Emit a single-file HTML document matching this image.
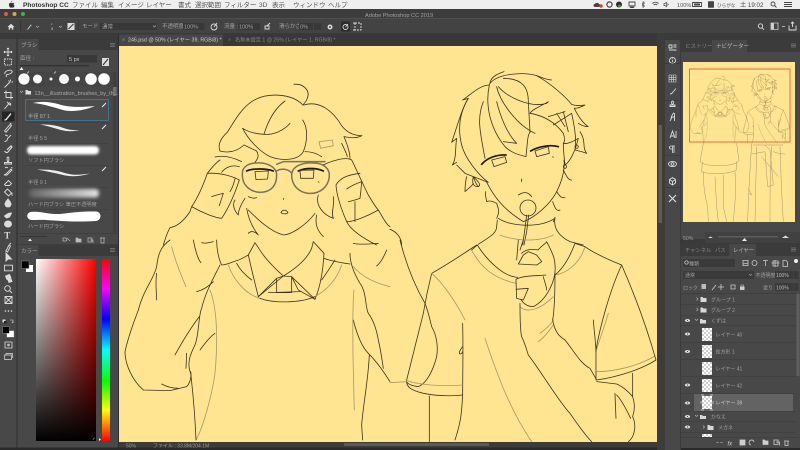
<!DOCTYPE html>
<html lang="ja"><head><meta charset="utf-8"><title>Adobe Photoshop CC 2019</title>
<style>
html,body{margin:0;padding:0;width:800px;height:450px;overflow:hidden;background:#3a3a3a}
svg{display:block;position:absolute;left:0;top:0;filter:blur(.35px)}
text{font-family:"Liberation Sans","Noto Sans CJK JP",sans-serif;font-size:6px;fill:#a0a0a0}
.w{fill:#e0e0e0}.d{fill:#8a8a8a}.m{font-size:6.5px;fill:#555}
.ic{fill:none;stroke:#dcdcdc;stroke-width:.9}
.art path,.art ellipse,.art circle{fill:none;stroke:#3a3320;stroke-linecap:round;stroke-linejoin:round}
.art .l{stroke:#a89a6a;stroke-width:.5em}
.art .k{stroke:#1d1a10;stroke-width:5}
.art .g{stroke:#77735e;stroke-width:4.500}
</style></head><body>
<svg width="800" height="450" viewBox="0 0 800 450" xmlns="http://www.w3.org/2000/svg">
<defs>
<filter id="bl" x="-10%" y="-60%" width="120%" height="220%"><feGaussianBlur stdDeviation="1.400"/></filter>
<filter id="bl2" x="-10%" y="-60%" width="120%" height="220%"><feGaussianBlur stdDeviation="1.800"/></filter>
<linearGradient id="gx" x1="0" x2="1" y1="0" y2="0"><stop offset="0" stop-color="#fff"/><stop offset="1" stop-color="#f00"/></linearGradient>
<linearGradient id="gy" x1="0" x2="0" y1="0" y2="1"><stop offset="0" stop-color="#000" stop-opacity="0"/><stop offset="1" stop-color="#000"/></linearGradient>
<linearGradient id="hue" x1="0" x2="0" y1="0" y2="1"><stop offset="0" stop-color="#f00"/><stop offset=".16" stop-color="#f0f"/><stop offset=".33" stop-color="#00f"/><stop offset=".5" stop-color="#0ff"/><stop offset=".67" stop-color="#0f0"/><stop offset=".83" stop-color="#ff0"/><stop offset="1" stop-color="#f00"/></linearGradient>
<linearGradient id="soft" x1="0" x2="1"><stop offset="0" stop-color="#fff" stop-opacity=".15"/><stop offset=".5" stop-color="#fff" stop-opacity=".5"/><stop offset="1" stop-color="#fff" stop-opacity=".85"/></linearGradient>
<pattern id="chk" width="4" height="4" patternUnits="userSpaceOnUse"><rect width="4" height="4" fill="#fff"/><rect width="2" height="2" fill="#cfcfcf"/><rect x="2" y="2" width="2" height="2" fill="#cfcfcf"/></pattern>
<clipPath id="cv"><rect x="119" y="46" width="538" height="396"/></clipPath>
<clipPath id="tb"><rect x="683" y="62" width="112" height="160"/></clipPath>
<g id="art" class="art">
<!-- left head -->
<g transform="translate(120 45) scale(.3333)">
<path d="M522 118C548 115 572 135 562 160C558 172 552 175 549 180"/>
<path d="M549 180C515 145 440 140 395 170C365 190 345 225 322 262C302 280 293 300 300 318"/>
<path d="M552 180C600 165 640 200 665 242C680 262 700 272 726 272C712 280 695 280 672 275"/>
<path d="M495 168C465 190 445 225 432 268C400 266 380 258 368 250"/>
<path d="M432 268C460 270 490 258 510 235"/>
<path d="M368 250C385 285 420 320 450 335C490 350 535 345 550 320C562 290 565 250 548 225"/>
<path d="M672 275C680 295 690 320 690 340M665 295C672 310 680 325 682 335"/>
<path d="M300 318C325 325 350 320 372 300L410 318C420 335 410 345 405 352M285 336C310 330 335 335 365 350"/>
<path d="M597 290L637 285L640 302L602 310Z" class="l"/>
<path d="M555 320C570 320 590 325 605 335"/>
<path class="g" d="M368 378C362 415 385 440 420 442C455 442 470 420 470 390C470 365 440 352 410 354C390 354 372 362 368 378Z"/>
<path class="g" d="M515 390C515 365 545 352 580 354C610 354 630 370 628 395C625 425 600 448 565 445C535 442 515 420 515 390Z"/>
<path class="g" d="M470 358L490 350L615 350M470 378C480 370 505 370 515 385"/>
<path class="k" d="M380 378C395 370 440 370 460 378M535 378C555 368 590 368 610 378"/>
<path d="M405 380L445 378L443 402L408 404ZM540 376L582 375L580 400L542 400Z"/>
<path d="M490 460L491 463M595 410L597 412M483 503C488 493 498 493 504 503C500 508 488 508 483 503"/>
<path d="M385 495C410 520 450 560 490 570C510 570 555 545 585 505"/>
<path d="M345 465C335 480 345 500 355 510C355 495 362 480 375 460M385 455C395 460 405 460 410 458M595 450C585 480 610 510 640 520C632 500 645 480 640 455"/>
<path d="M380 490C385 520 395 545 415 570C405 560 395 555 385 565M590 510C585 535 590 555 610 575"/>
<path d="M300 345C285 355 272 372 262 385C250 420 235 455 215 485C250 505 285 518 305 520C325 490 345 445 358 405C340 395 300 382 262 385"/>
<path d="M275 455C288 450 298 448 310 445C306 458 302 470 298 482M305 382C315 368 335 358 358 365M345 400C342 415 338 428 330 440"/>
<path d="M215 485L210 500C190 530 170 545 150 548C140 565 135 585 130 600"/>
<path d="M610 360C640 345 680 335 695 345C710 375 730 420 745 450C760 475 770 490 775 495C740 515 700 530 680 530C665 495 650 450 648 420C660 400 680 390 720 385"/>
<path d="M680 432C695 422 710 415 725 410C724 428 722 445 720 460C708 464 696 468 685 470M705 470L705 530M680 530C690 550 720 575 770 600M775 495C790 520 800 540 810 545"/>
</g>
<!-- left body -->
<g transform="translate(120 240) scale(.3333)">
<path d="M150 0C130 15 115 30 110 80C100 120 70 150 55 210C40 250 25 290 15 335C15 370 35 420 70 450L150 452L200 440C210 430 215 410 212 395"/>
<path d="M300 75C280 115 255 160 245 205C235 225 238 280 225 315C210 345 200 370 212 400"/>
<path d="M110 100C105 130 110 160 110 180M230 155C250 150 265 140 280 125M165 345C190 300 215 260 238 230M240 330C255 310 270 290 285 280"/>
<path class="l" d="M155 20C165 60 185 110 198 140M270 150C290 200 295 290 285 400C275 470 250 560 228 600"/>
<path d="M212 400C218 450 225 530 228 600"/>
<path d="M290 0C290 25 295 55 305 75C320 75 340 65 350 62C365 58 375 50 385 45"/>
<path d="M385 45L405 8L425 38C440 60 470 90 490 108L415 170C405 130 395 90 385 45"/>
<path d="M490 108C520 90 560 60 575 25L580 5L612 40C610 80 605 130 585 178L515 110"/>
<path d="M490 108L515 110L535 150L585 178M490 108L470 115L415 170M470 115L470 158L515 158L515 110M445 158L540 155"/>
<path class="l" d="M325 75C340 120 380 165 420 175M585 170C620 150 650 120 665 75"/>
<path d="M420 175C460 190 540 190 585 170M612 55C625 60 645 65 690 72M350 70C360 90 375 105 395 120M605 120C620 100 635 75 645 60"/>
<path d="M690 40C690 70 705 105 720 130C740 155 735 200 745 220C760 240 770 270 775 300C780 320 785 350 790 385"/>
<path d="M700 240C710 280 725 320 745 340C760 355 785 385 810 425"/>
<path class="l" d="M700 80C730 115 770 130 810 140"/>
<path class="l" d="M702 150C695 230 700 400 703 510"/>
<path d="M748 345C745 420 730 490 725 555L728 600"/>
<path d="M220 0C225 30 235 60 243 68M280 5C265 10 250 10 245 8M700 10C720 15 750 12 775 10M800 30C790 55 780 70 770 78M200 340L198 385M125 432C140 440 160 445 175 445"/>
</g>
<!-- right head -->
<g transform="translate(390 45) scale(.3333)">
<path d="M300 112C305 95 320 88 342 80M298 118C320 85 400 80 440 92C460 100 475 105 485 105"/>
<path d="M440 92C490 120 530 160 545 178C555 182 570 182 585 180C570 188 560 190 553 190C565 215 580 235 595 245C580 245 572 240 565 235"/>
<path d="M298 120C270 120 240 150 218 165L235 160C215 190 200 250 185 292L200 280C195 310 200 340 187 360L200 352"/>
<path d="M235 160C205 210 205 260 215 300C225 340 265 390 295 412L250 395C255 410 260 420 265 425"/>
<path d="M298 120C285 180 300 250 345 305C365 325 390 330 408 335C412 300 412 265 422 260"/>
<path d="M320 125C330 170 380 240 435 265M340 100C400 100 415 130 415 170L420 260M325 125C350 155 420 190 470 175L475 170C440 190 425 195 420 205M320 170C330 210 350 265 380 295L340 290"/>
<path d="M420 205C450 210 490 225 520 265C525 280 525 290 520 295"/>
<path d="M475 215L525 200M490 240L545 205M500 205L525 245M520 200L535 260M545 205C555 250 560 290 555 315L575 320L590 325C575 305 590 290 570 260"/>
<path d="M520 295C530 298 550 290 565 280C555 320 540 350 525 360C523 340 520 320 520 295"/>
<path d="M290 412C310 450 335 490 400 530C430 520 480 480 500 440C515 410 525 375 522 345"/>
<path class="k" d="M275 358C290 340 320 328 348 330M422 318C445 305 480 298 505 305"/>
<path d="M305 345L345 335L350 352L312 365ZM435 318L475 305L478 325L440 335ZM488 335L490 337M395 402L395 410M385 450C400 440 415 440 425 455"/>
<circle cx="414" cy="489" r="24"/>
<path d="M410 510L405 550L398 600M416 510L410 560L402 600"/>
<path d="M325 520C360 545 450 550 495 520L490 530"/>
<path d="M322 525L320 545C320 565 300 575 265 598M495 517C490 545 500 570 540 590L580 600"/>
<path class="l" d="M330 570C380 590 450 590 490 570"/>
<path d="M287 440C285 455 290 465 290 470C300 465 310 470 320 475C325 490 330 500 320 520M488 470C495 490 500 500 510 495M500 440C510 455 515 460 525 458M520 375C530 395 535 405 545 405"/>
<path d="M200 360L225 385L250 395C265 410 275 420 265 425C250 425 245 415 250 395M0 553C20 560 35 580 35 600"/>
<circle cx="525" cy="365" r="5"/><circle cx="560" cy="305" r="5"/>
<path d="M230 395C225 415 225 430 225 440C235 430 245 425 250 415"/>
<path d="M285 340C270 260 260 220 280 170"/>
</g>
<!-- right body -->
<g transform="translate(390 240) scale(.3333)">
<path d="M30 0C45 60 70 130 105 190C115 215 120 240 125 260C140 285 145 320 140 350C130 390 110 430 85 440C70 438 55 435 50 425"/>
<path d="M260 15C215 45 170 75 125 100C115 140 105 190 100 220C85 280 65 360 50 420C48 440 60 450 100 460C150 470 190 468 218 465"/>
<path d="M218 250C220 330 218 400 218 465C215 510 215 540 195 600M118 468L118 605"/>
<path class="l" d="M125 100C160 130 200 190 225 240M48 420C80 435 160 440 218 435M0 428L50 425M245 30C270 80 310 115 378 130M585 20C570 70 530 100 495 105M620 395C680 395 750 375 795 348M655 220C640 270 625 310 618 335M285 295C320 400 360 510 425 605M445 305C465 290 480 270 490 255M450 280C470 265 485 250 490 240M390 200C410 220 450 210 490 170"/>
<path d="M245 30L262 15C290 60 340 110 383 112M555 10C540 50 520 85 495 105"/>
<path d="M555 10L585 20C620 45 670 65 695 75C730 155 770 260 798 360C760 385 690 410 620 420L600 385C570 370 550 330 525 300C510 290 495 280 488 240C495 200 495 130 495 100"/>
<path d="M695 75C660 150 630 260 618 330L618 420M610 240C612 270 618 310 618 340"/>
<path d="M728 400L728 470C735 490 735 510 728 530C740 555 735 590 715 605M620 425L680 432C700 440 720 460 728 470M675 460L678 535M680 465C695 480 710 510 722 535"/>
<path d="M395 40C405 30 420 25 445 30C450 20 470 10 470 5C480 25 495 50 495 75C500 120 470 180 430 200C415 200 400 192 393 178"/>
<path d="M378 118L380 175L400 180L415 145L378 148M385 72L440 75L455 65L440 45L415 35L400 45L385 72M378 118C400 105 450 108 468 105M460 110C465 130 470 140 470 150"/>
<path d="M390 190C390 230 390 270 395 290C405 310 410 330 415 345C450 390 510 490 540 520C560 550 590 590 605 605"/>
<path d="M218 320C210 330 205 340 210 342C214 342 218 338 218 335M385 0L380 60M400 0L390 30"/>
</g>
</g>
</defs>

<!-- chrome -->
<rect width="800" height="450" fill="#3a3a3a"/>
<rect width="800" height="9" fill="#efefef"/>
<rect y="9" width="800" height="9" fill="#3d3d3d"/>
<rect y="18" width="800" height="16" fill="#434343"/>
<rect y="18" width="800" height=".6" fill="#555"/>
<rect y="33.5" width="800" height="1" fill="#303030"/>

<!-- menu bar -->
<path d="M11.600 2.200c.6-.7.9-.9.8-1.400-.6.1-1.100.5-1.100 1.300zM14.400 3.200c-1-.8-1.800-.1-2.500-.1-.7 0-1.300-.7-2.300 0-1 .9-.8 2.700.2 4 .7.9 1.300.5 2 .4.7.1 1.300.5 2-.4.4-.5.7-1 .8-1.500-1.200-.5-1.200-1.900-.2-2.400z" fill="#333"/>
<text x="23" y="7" style="font-size:6.600px;font-weight:bold;fill:#333">Photoshop CC</text>
<text class="m" x="72" y="7">ファイル</text><text class="m" x="101" y="7">編集</text><text class="m" x="118" y="7">イメージ</text><text class="m" x="146" y="7">レイヤー</text><text class="m" x="178" y="7">書式</text><text class="m" x="195" y="7">選択範囲</text><text class="m" x="224" y="7">フィルター</text><text class="m" x="259" y="7">3D</text><text class="m" x="272" y="7">表示</text><text class="m" x="293" y="7">ウィンドウ</text><text class="m" x="328" y="7">ヘルプ</text>
<g fill="none" stroke="#444" stroke-width=".9">
<path d="M595 6.500c-1.500-.3-1.300-2.200.2-2.200.5-1.500 3.300-1.300 3.600.2 1.500 0 1.700 2 .2 2z" fill="#444"/>
<circle cx="609.500" cy="4.500" r="2.600" stroke-width="1.200"/>
<path d="M629 2h6v4h-6zM630.500 7.500h3l-1.500-1.800z"/>
<path d="M643 1.500l1.500 1.500-2.500 2.500M643 1.500v6l1.500-1.500-2.500-2.500" stroke-width=".6"/>
<path d="M652.500 3.500c1.800-1.700 4.200-1.700 6 0M653.800 5c1-.9 2.400-.9 3.400 0"/>
<path d="M664 3.500h1l1.500-1.200v4.500l-1.500-1.200h-1zM667.500 3.500l.8 1-.8 1" stroke-width=".7"/>
<path d="M692.500 2.500h9v4h-9z"/>
<circle cx="773" cy="4" r="2"/><path d="M774.500 5.500l2 2"/>
<path d="M784 2.500h8M784 4.500h8M784 6.500h8"/>
</g>
<circle cx="601" cy="6" r="1.700" fill="#e0392b"/>
<circle cx="619" cy="4.500" r="3" fill="#2c2c2c"/><circle cx="619.500" cy="6" r="1.500" fill="#3f8f3f"/>
<rect x="694" y="3.500" width="6" height="2" fill="#444"/>
<rect x="708" y="1.300" width="6" height="6.400" rx=".6" fill="#444"/>
<text x="677" y="7" style="font-size:5.600px;fill:#555">100%</text>
<text x="717" y="7" style="font-size:4.600px;fill:#555">ひらがな</text>
<text x="740" y="7" style="font-size:6.200px;fill:#444">土 19:02</text>

<!-- title -->
<circle cx="6" cy="14" r="2" fill="#e0584f"/><circle cx="14.500" cy="14" r="2" fill="#e0a82e"/><circle cx="23" cy="14" r="2" fill="#3fb34a"/>
<text x="365" y="17" style="font-size:5.600px;fill:#a0a0a0">Adobe Photoshop CC 2019</text>

<!-- options bar -->
<path d="M7.500 27l3.500-3.200 3.500 3.200h-1.200v2.600h-1.500v-1.700h-1.600v1.700H8.700V27z" fill="#e0e0e0"/>
<rect x="20" y="21" width=".6" height="10" fill="#2f2f2f"/>
<path d="M26 30c1 0 1.500-.5 1.800-1.500l3.200-4 .6.500-3.200 4c-.7.800-1.500 1-2.400 1z" fill="#e6e6e6"/>
<path d="M36 26l1.500 1.500L39 26" style="fill:none;stroke:#aaa;stroke-width:.7"/>
<text x="51" y="25" style="font-size:4px;fill:#ccc">•</text><text x="51" y="30" style="font-size:4px;fill:#ccc">5</text>
<path d="M59 26l1.500 1.500L62 26" style="fill:none;stroke:#aaa;stroke-width:.7"/>
<rect x="67.500" y="23" width="7" height="7" fill="#ddd"/><path d="M68.500 29l5-5" stroke="#333" stroke-width="1"/>
<rect x="78" y="21" width=".6" height="10" fill="#2f2f2f"/>
<text x="82" y="28" style="font-size:5.500px">モード :</text>
<rect x="100" y="23" width="57" height="7" fill="#383838"/><text x="102" y="28.500" style="font-size:5.500px">通常</text>
<path d="M153 25.500l1.500 1.500 1.500-1.500" style="fill:none;stroke:#aaa;stroke-width:.7"/>
<text x="162" y="28" style="font-size:5.500px">不透明度 :</text>
<rect x="183" y="23" width="15" height="7" fill="#383838"/><rect x="198.500" y="23" width="6" height="7" fill="#383838"/><text x="184" y="28.500" style="font-size:5.500px">100%</text>
<circle cx="214" cy="27" r="3" class="ic"/><path d="M214 27l3-4" class="ic"/>
<text x="224" y="28" style="font-size:5.500px">流量 :</text>
<rect x="238" y="23" width="14" height="7" fill="#383838"/><rect x="253" y="23" width="7" height="7" fill="#383838"/><text x="239" y="28.500" style="font-size:5.500px">100%</text>
<path d="M265 29v-3h4v3zM267 26l3-3" class="ic"/>
<text x="279" y="28" style="font-size:5.500px">滑らかさ :</text>
<rect x="299" y="23" width="14" height="7" fill="#383838"/><rect x="314" y="23" width="7" height="7" fill="#383838"/><text x="300" y="28.500" style="font-size:5.500px">0%</text>
<circle cx="330" cy="27" r="2.500" fill="#ddd"/><circle cx="330" cy="27" r="1" fill="#444"/>
<rect x="341" y="21.500" width="9" height="10" rx="1" fill="#2b2b2b"/><circle cx="345.500" cy="27" r="2.500" class="ic"/><path d="M345.500 27l2.500-3" class="ic"/>
<path d="M355 23h6v7h-6zM353 23h2M353 30h2" class="ic" stroke-dasharray="2 1"/>
<circle cx="760.500" cy="26" r="2.200" class="ic"/><path d="M762 27.700l2 2" class="ic"/>
<path d="M771 23h7v6.500h-7z" style="fill:none;stroke:#ccc;stroke-width:.8"/><rect x="771" y="23" width="3" height="6.500" fill="#ccc"/>
<rect x="782" y="26" width="3" height=".8" fill="#ccc"/>
<path d="M789 25.500v4.500h7v-4.500M792.500 27v-5M791 23.500l1.500-1.500 1.500 1.500" class="ic"/>

<!-- left toolbar -->
<rect x="0" y="34" width="17" height="416" fill="#484848"/>
<rect x="16.500" y="34" width="1" height="416" fill="#2e2e2e"/>
<rect x="0" y="34" width="17" height="5" fill="#3a3a3a"/>
<rect x="2" y="111.500" width="12.500" height="10" fill="#262626"/>
<g class="ic">
<g transform="translate(8 52)"><path d="M0-4v8M-4 0h8M0-4l-1 1M0-4l1 1M0 4l-1-1M0 4l1-1M-4 0l1-1M-4 0l1 1M4 0l-1-1M4 0l-1 1"/></g>
<g transform="translate(8 62)"><path d="M-3.500-3h7v6h-7z" stroke-dasharray="1.500 .8"/></g>
<g transform="translate(8 73)"><path d="M-3 1c-1.500-3 6-5 7-3s-3 3.500-5 3.500c-1 0-1 1.500-.5 2.500"/></g>
<g transform="translate(8 83.500)"><path d="M-3.500 4l6-6M2.500-4v1.500M5-1.500H3.500M.5-3l1 1"/></g>
<g transform="translate(8 94.500)"><path d="M-2-4v7h7M-4-2h7v7"/></g>
<g transform="translate(8 105)"><path d="M-3.500 4l4-5M-1-3l3 3M.5-1.500c1-2 3.500 1 1.500 2"/></g>
<g transform="translate(8 116.500)"><path d="M-3.500 3.500c1.500 0 2-.5 2.500-1.500l4-5" style="stroke-width:1.300;stroke:#f0f0f0"/></g>
<g transform="translate(8 127)"><path d="M-3.500 4l5.500-6.500 1.500 1.200-5.500 6.500zM2-4l1.500 1.200"/></g>
<g transform="translate(8 138)"><path d="M-3.500 3.500c2 0 3-1.500 3-3l3.500-3.500M-3-3c1.500 0 2 1 3 1"/></g>
<g transform="translate(8 149)"><path d="M-3.500 2c1 1.500 2.500 2 3.500 1l4-5-1-1.200-4 4" style="stroke-width:1.100"/></g>
<g transform="translate(8 160)"><path d="M-3.500 4h7v-1.500h-7zM0 2.500c-1.500-2.500-1-5.500 0-5.500s1.500 3 0 5.500"/></g>
<g transform="translate(8 171)"><path d="M-4 4l2-1 5-5 1 1-5 5zM-3-3c1-1 2-1 3 0M3-3.500l1.500.5"/></g>
<g transform="translate(8 181.500)"><path d="M-3.500 3l4-4 3 3-2 2h-4z"/></g>
<g transform="translate(8 192)"><path d="M-3.500 0l3-3 4 4-3 3zM4.500 3.500c-1-1-1-2 0-2.500"/></g>
<g transform="translate(8 203)"><path d="M0-4c-2 2.500-3 3.500-3 5a3 3 0 0 0 6 0c0-1.500-1-2.500-3-5z" fill="#dcdcdc"/></g>
<g transform="translate(8 214)"><path d="M-3.500 2c3-2.500 5-3.500 7-3l-2 4-3 1z" fill="#dcdcdc"/></g>
<g transform="translate(8 224)"><ellipse cx="0" cy="0" rx="3.500" ry="3" fill="#dcdcdc"/></g>
</g>
<text x="4.300" y="238.500" style="font-size:9px;font-weight:bold;font-family:'Liberation Serif',serif;fill:#ddd">T</text>
<g class="ic">
<g transform="translate(8 247)"><path d="M-2 4l3-6 1.500 1-3 6zM-2.500 4.500l1-1M3-4L1.500-2.500"/></g>
<g transform="translate(8 257)"><path d="M-2-4v8l2-2h3.500z" fill="#dcdcdc"/></g>
<g transform="translate(8.500 268)"><path d="M-4-2.800h8v5.600h-8z"/></g>
<g transform="translate(8 279)"><path d="M-2.500-3l4-1.500 1.500 3.500-4 1.500zM0 1l3-1 1 2.500-3 1z" fill="#dcdcdc"/></g>
<g transform="translate(8 289)"><circle cx="-.5" cy="-.5" r="2.800"/><path d="M1.500 1.500l2.500 2.500"/></g>
<g transform="translate(8.500 300)"><path d="M-3.500-3.500h7v7h-7zM-3.500-3.500l7 7M3.500-3.500l-7 7"/></g>
</g>
<circle cx="5.500" cy="311" r=".8" fill="#ddd"/><circle cx="8.500" cy="311" r=".8" fill="#ddd"/><circle cx="11.500" cy="311" r=".8" fill="#ddd"/>
<rect x="2.500" y="319.500" width="3" height="3" fill="#ddd"/><rect x="4" y="321" width="2.500" height="2.500" fill="#222"/>
<path d="M10 320h3v3M13 323l-1-1" class="ic" style="stroke-width:.6"/>
<rect x="6.700" y="330.700" width="7.300" height="6.500" fill="#fff" stroke="#777" stroke-width=".3"/>
<rect x="2.700" y="326.700" width="6.600" height="6.500" fill="#000" stroke="#999" stroke-width=".4"/>
<path d="M5 342h7v6H5z" class="ic" style="stroke-width:.8"/><circle cx="8.500" cy="345" r="1.400" fill="#bbb"/>
<path d="M4.500 355h7v4.500h-7zM6 355v-1.500h6.500v4.500" class="ic" style="stroke-width:.7"/>

<!-- brush panel -->
<rect x="17.500" y="34" width="101" height="416" fill="#484848"/>
<rect x="17.500" y="34" width="101" height="5" fill="#3a3a3a"/>
<rect x="17.500" y="39" width="101" height="11" fill="#3b3b3b"/>
<rect x="17.500" y="39" width="21" height="11" fill="#484848"/>
<text x="21" y="47" style="font-size:5.500px;fill:#b0b0b0">ブラシ</text>
<path d="M110 43.500h5M110 45h5M110 46.500h5" stroke="#999" stroke-width=".6"/>
<text x="20" y="60" style="font-size:5.500px">直径 :</text>
<rect x="67" y="55" width="30" height="7.500" fill="#383838"/>
<text x="69" y="61" style="font-size:5.500px;fill:#ccc">5 px</text>
<rect x="102" y="58" width="7" height="8" fill="#ddd"/><path d="M103 65l5-6" stroke="#333" stroke-width="1"/>
<rect x="20" y="65" width="69" height="1.200" fill="#2f2f2f"/>
<path d="M19.500 70l2-3 2 3z" fill="#eee"/>
<rect x="17.500" y="72" width="96" height="15" fill="#454545"/>
<circle cx="24" cy="79" r="5.600" fill="#fff"/><circle cx="37.500" cy="79" r="4.500" fill="#fff"/><circle cx="51" cy="79" r="1.500" fill="#fff"/><circle cx="64" cy="79" r="5" fill="#fff"/><circle cx="77.500" cy="79" r="2.500" fill="#fff"/><circle cx="91" cy="79" r="5.800" fill="#fff"/><circle cx="104" cy="79" r="5.800" fill="#fff"/>
<path d="M27 73.500l2-2M54 73.500l2-2" stroke="#eee" stroke-width=".7"/>
<rect x="113" y="72" width="3.500" height="161" fill="#3f3f3f"/><rect x="113" y="87" width="3.500" height="9" fill="#707070"/>
<path d="M20 91l1.500 1.500L23 91" style="fill:none;stroke:#bbb;stroke-width:.7"/>
<path d="M25.500 90h2l1 1h2.500v3.500h-5.500z" fill="#ddd"/>
<text x="34.500" y="95" style="font-size:5.500px;fill:#aaa">13n__illustration_brushes_by_th...</text>
<rect x="25.500" y="99.500" width="83" height="21" fill="#4c4c4c" stroke="#3f7d9e" stroke-width=".8"/>
<path d="M33 103C42 101 50 102 58 104C70 108 82 107 95 106C85 110 75 112 65 110.500C55 108 45 104 33 103z" fill="#fff"/>
<text x="28" y="118" style="font-size:5.200px;fill:#b0b0b0">半径 87 1</text>
<path d="M102 107l4-4" stroke="#eee" stroke-width="1"/>
<rect x="25.500" y="122" width="83" height=".5" fill="#3a3a3a"/>
<path d="M40 124.500c10 0 15 .5 22 3s12 3 18 2.500c-6 1.500-12 1.800-19 0s-13-4-21-5.500z" fill="#eee"/>
<path d="M102 129l4-4" stroke="#eee" stroke-width="1"/>
<text x="28" y="140" style="font-size:5.200px">半径 5 5</text>
<rect x="25.500" y="143.500" width="83" height=".5" fill="#3a3a3a"/>
<rect x="27" y="146" width="72" height="8.500" rx="4" fill="#fff" filter="url(#bl)"/>
<text x="28" y="162" style="font-size:5.200px">ソフト円ブラシ</text>
<rect x="25.500" y="165.500" width="83" height=".5" fill="#3a3a3a"/>
<path d="M37 169.500c12 0 18 .5 26 3s14 3 27 1c-9 3-19 3.500-27 1.500s-17-4-26-5.500z" fill="#eee"/>
<path d="M102 171l4-4" stroke="#eee" stroke-width="1"/>
<text x="28" y="184" style="font-size:5.200px">半径 9 1</text>
<rect x="25.500" y="187.500" width="83" height=".5" fill="#3a3a3a"/>
<rect x="29" y="189" width="70" height="8.500" rx="4" fill="url(#soft)" filter="url(#bl2)"/>
<text x="28" y="206" style="font-size:5.200px">ハード円ブラシ 筆圧不透明度</text>
<rect x="25.500" y="209.500" width="83" height=".5" fill="#3a3a3a"/>
<path d="M31 212c10-1 15 2 25 2s20-3 40-2.500c6 .5 6 8.500 0 9.500-15 1-30 .5-42-.5s-16-.5-23-.5c-5-1-5-7.500 0-8z" fill="#fff"/>
<text x="28" y="228" style="font-size:5.200px">ハード円ブラシ</text>
<rect x="17.500" y="233" width="101" height=".6" fill="#3a3a3a"/>
<rect x="20" y="236" width="27" height=".8" fill="#333"/>
<path d="M28 241l2-2.500 2 2.500z" fill="#eee"/>
<g style="fill:none;stroke:#bbb;stroke-width:.7">
<path d="M63 238h3c1 1 1 3 0 3h-3zM67 238l3 3"/><path d="M76 238h1.500l1 1h2.500v3h-5z" fill="#bbb"/><path d="M88 238h4v4h-4zM90 240h3v3"/><path d="M100 238h5M101 238v5h3v-5"/>
</g>
<rect x="17.500" y="244.500" width="101" height="1" fill="#333"/>
<!-- colour panel -->
<rect x="17.500" y="245" width="101" height="11" fill="#3b3b3b"/>
<rect x="17.500" y="245" width="21" height="11" fill="#484848"/>
<text x="21" y="253" style="font-size:5.500px;fill:#a0a0a0">カラー</text>
<path d="M110 248.500h5M110 250h5M110 251.500h5" stroke="#999" stroke-width=".6"/>
<rect x="26" y="265" width="7" height="7" fill="#fff"/>
<rect x="21.500" y="261" width="7.500" height="7.500" fill="#000" stroke="#aaa" stroke-width=".4"/>
<rect x="36" y="259" width="60" height="182" fill="url(#gx)"/><rect x="36" y="259" width="60" height="182" fill="url(#gy)"/>
<rect x="102" y="259" width="8" height="182" fill="url(#hue)"/>
<path d="M99 438l2 1.500-2 1.500z" fill="#eee"/>
<path d="M93 440c0-1.500 1-2 2-2" style="fill:none;stroke:#ccc;stroke-width:.5"/>
<rect x="118" y="34" width="1" height="416" fill="#2c2c2c"/>

<!-- tab strip & canvas -->
<rect x="119" y="34" width="538" height="12" fill="#383838"/>
<rect x="119" y="34.500" width="104" height="11.500" fill="#474747"/>
<text x="122" y="41.500" style="font-size:5px;fill:#999">×</text>
<text x="128" y="41.500" style="font-size:5.300px;fill:#d0d0d0">246.psd @ 50% (レイヤー 39, RGB/8) *</text>
<text x="228" y="41.500" style="font-size:5px;fill:#777">×</text>
<text x="235" y="41.500" style="font-size:5.200px;fill:#858585">名称未設定 1 @ 25% (レイヤー 1, RGB/8) *</text>
<rect x="119" y="46" width="538" height="396" fill="#ffe591"/>
<g clip-path="url(#cv)" stroke-width="2.400" font-size="5"><use href="#art"/></g>
<!-- status -->
<rect x="119" y="442" width="546" height="8" fill="#3c3c3c"/>
<text x="126" y="447.500" style="font-size:5px;fill:#9a9a9a">50%</text>
<text x="153" y="447.500" style="font-size:5px;fill:#9a9a9a">ファイル : 33.8M/204.1M</text>
<rect x="344" y="443" width="145" height="3" fill="#5a5a5a"/>
<rect x="0" y="447.500" width="800" height="2.500" fill="#2a2a2a"/>

<!-- right scroll + strip -->
<rect x="657" y="34" width="8" height="416" fill="#3c3c3c"/>
<rect x="658.500" y="125" width="3.500" height="98" fill="#5c5c5c"/>
<rect x="665" y="34" width="16" height="416" fill="#484848"/>
<rect x="680.500" y="34" width="1" height="416" fill="#2e2e2e"/>
<rect x="664.500" y="34" width="135.500" height="6" fill="#3a3a3a"/>
<g style="fill:none;stroke:#dcdcdc;stroke-width:.9">
<path d="M669 45h3v3h-3zM673.500 45h3M673.500 47h3M669 50h7.500"/>
<circle cx="672.500" cy="60.500" r="3"/><path d="M672.500 60v2M672.500 58.500v.6"/>
<path d="M669 75h7v7h-7zM671.300 75v7M673.700 75v7M669 77.300h7M669 79.700h7" style="stroke-width:.6"/>
<path d="M670 94c1.500 0 2-.5 2.500-1.500l3.500-4"/>
<path d="M670 105h5v1.500h-5zM672.500 105c-1.500-2-1-4 0-4s1.500 2 0 4"/>
<path d="M671 118c1-3 2-5 3-5M670 121l2-4 3 0M674.500 113v8"/>
<path d="M670 138l2.500-7 2.500 7M671 136h3M676 131v7"/>
<path d="M671 146h4M671 146a1.500 1.500 0 0 0 0 3h1.500v-3M674 146v7M672.500 149v4" style="stroke-width:.8"/>
<ellipse cx="672.500" cy="164" rx="4" ry="2.600"/><circle cx="672.500" cy="164" r="1.400"/>
<path d="M669.500 179.500l3-2 3 2v3.500l-3 2-3-2zM669.500 179.500l3 2 3-2M672.500 181.500v3.500"/>
<path d="M669 195l7 7M676 195l-7 7" style="stroke-width:1.200"/>
</g>
<rect x="664.500" y="63" width="16" height=".5" fill="#333"/><rect x="664.500" y="100" width="16" height=".5" fill="#333"/><rect x="664.500" y="155" width="16" height=".5" fill="#333"/><rect x="664.500" y="187" width="16" height=".5" fill="#333"/>

<!-- nav panel -->
<rect x="681" y="40" width="119" height="199" fill="#484848"/>
<rect x="681" y="40" width="119" height="12" fill="#3b3b3b"/>
<rect x="712" y="40" width="35" height="12" fill="#484848"/>
<text x="685" y="48" style="font-size:5.500px;fill:#858585">ヒストリー</text>
<text x="716" y="48" style="font-size:5.500px;fill:#bbb">ナビゲーター</text>
<path d="M791 44h5M791 45.500h5M791 47h5" stroke="#999" stroke-width=".6"/>
<rect x="683" y="62" width="112" height="160" fill="#ffe591"/>
<g clip-path="url(#tb)">
<g stroke-width="5" opacity=".6"><g transform="translate(689 69) scale(.1877) translate(-119 -46)"><use href="#art"/></g></g>
<g transform="translate(655 30) scale(.3333)" fill="none" stroke="#a3966c" stroke-width="1.500">
<path d="M145 340L135 395C150 412 240 412 252 392L245 340"/>
<path d="M142 395L140 425C165 435 225 432 245 420L245 395"/>
<path d="M145 425C145 470 150 500 158 530L160 575M180 440L185 530L190 575M205 435L205 530L215 575M240 425C245 470 240 520 235 575"/>
<path d="M290 340C285 420 280 500 278 575M305 350L300 575M350 350C345 420 345 500 345 575M375 350C378 430 380 500 385 575M330 345L345 360L355 465L338 470L330 365"/>
<path d="M295 345L385 345M290 372L330 365M355 365C365 370 380 372 390 372"/>
<path d="M320 380L370 440M280 475L290 495L280 490"/>
</g>
</g>
<rect x="689.500" y="69" width="100.500" height="73" fill="none" stroke="#e7603f" stroke-width=".9"/>
<rect x="705" y="232" width="95" height="11" fill="#414141"/>
<text x="683" y="240" style="font-size:5.200px;fill:#999">50%</text>
<path d="M708 238l2.500-1.500 2.500 1.500z" fill="#ddd"/><rect x="718" y="236.500" width="60" height=".8" fill="#777"/><path d="M742 241l2.500-3 2.500 3z" fill="#eee"/><path d="M782 238l3.500-2.500 3.500 2.500z" fill="#ddd"/>

<!-- layers panel -->
<rect x="681" y="244" width="119" height="204" fill="#484848"/>
<rect x="681" y="244" width="119" height="12" fill="#3b3b3b"/>
<rect x="729" y="244" width="27" height="12" fill="#484848"/>
<text x="685" y="252" style="font-size:5.300px;fill:#858585">チャンネル</text>
<text x="715" y="252" style="font-size:5.300px;fill:#858585">パス</text>
<text x="733" y="252" style="font-size:5.300px;fill:#bbb">レイヤー</text>
<path d="M791 248h5M791 249.500h5M791 251h5" stroke="#999" stroke-width=".6"/>
<rect x="683" y="259" width="52" height="8" fill="#3a3a3a"/>
<circle cx="686.500" cy="262.500" r="1.700" class="ic" style="stroke-width:.7"/>
<text x="689" y="265.500" style="font-size:5px">種類</text>
<g style="fill:none;stroke:#ccc;stroke-width:.8">
<path d="M743 260.500h5v5h-5zM743 264l5-1"/><circle cx="754.500" cy="263" r="2.500"/><path d="M763 260.500h5M765.500 260.500v5.500M773 261h5v5h-5zM775 260v7M771.500 263h8"/><path d="M783 260.500h3l1.500 1.500v4.500h-4.500z"/>
</g>
<circle cx="796" cy="261" r="2" fill="#eee"/>
<rect x="683" y="271" width="71" height="8" fill="#3a3a3a"/><text x="685" y="277" style="font-size:5px">通常</text>
<path d="M749 274l1.500 1.500 1.500-1.500" style="fill:none;stroke:#aaa;stroke-width:.6"/>
<text x="755.500" y="277" style="font-size:5px">不透明度 :</text>
<rect x="775" y="271" width="18" height="8" fill="#3a3a3a"/><text x="776" y="277" style="font-size:5px;fill:#bbb">100%</text><rect x="793.500" y="271" width="5" height="8" fill="#3a3a3a"/>
<text x="683" y="289.500" style="font-size:5px">ロック :</text>
<rect x="701.500" y="284" width="4.500" height="5" fill="#bbb"/>
<path d="M712 290l4-5M721 284v6M718 287h6M731 285h4v4h-4z" style="fill:none;stroke:#ccc;stroke-width:.8"/>
<rect x="740" y="286.500" width="4.500" height="3.500" fill="#ccc"/><path d="M741 286.500v-1.500h2.500v1.500" style="fill:none;stroke:#ccc;stroke-width:.6"/>
<text x="763" y="289.500" style="font-size:5px">塗り :</text>
<rect x="775" y="283" width="18" height="8" fill="#3a3a3a"/><text x="776" y="289.500" style="font-size:5px;fill:#bbb">100%</text><rect x="793.500" y="283" width="5" height="8" fill="#3a3a3a"/>
<rect x="681" y="293" width="115" height=".6" fill="#3a3a3a"/>
<g fill="#3a3a3a">
<rect x="681" y="304.500" width="115" height=".5"/><rect x="681" y="315" width="115" height=".5"/><rect x="681" y="325.500" width="115" height=".5"/><rect x="681" y="342.500" width="115" height=".5"/><rect x="681" y="359.500" width="115" height=".5"/><rect x="681" y="376.500" width="115" height=".5"/><rect x="681" y="393.500" width="115" height=".5"/><rect x="681" y="411" width="115" height=".5"/><rect x="681" y="421.500" width="115" height=".5"/><rect x="681" y="432" width="115" height=".5"/>
</g>
<rect x="694" y="394" width="99" height="17" fill="#636363"/>
<rect x="796.500" y="294" width="3" height="82" fill="#5f5f5f"/>
<!-- eyes -->
<g fill="#dcdcdc"><ellipse cx="687.500" cy="320.500" rx="2.700" ry="1.500"/><ellipse cx="687.500" cy="334" rx="2.700" ry="1.500"/><ellipse cx="687.500" cy="351.500" rx="2.700" ry="1.500"/><ellipse cx="687.500" cy="385" rx="2.700" ry="1.500"/><ellipse cx="687.500" cy="403" rx="2.700" ry="1.500"/><ellipse cx="687.500" cy="416.500" rx="2.700" ry="1.500"/><ellipse cx="687.500" cy="427" rx="2.700" ry="1.500"/></g>
<g fill="#484848"><circle cx="687.500" cy="320.500" r=".6"/><circle cx="687.500" cy="334" r=".6"/><circle cx="687.500" cy="351.500" r=".6"/><circle cx="687.500" cy="385" r=".6"/><circle cx="687.500" cy="403" r=".6"/><circle cx="687.500" cy="416.500" r=".6"/><circle cx="687.500" cy="427" r=".6"/></g>
<!-- folders -->
<path d="M696.500 297.500l1.500 1.500-1.500 1.500M696.500 308l1.500 1.500-1.500 1.500M695 319l1.500 1.500 1.500-1.500M695 415l1.500 1.500 1.500-1.500M703 425.500l1.500 1.500-1.500 1.500" style="fill:none;stroke:#bbb;stroke-width:.6"/>
<path d="M700.500 297h2l1 1h3v4h-6zM700.500 307.500h2l1 1h3v4h-6zM700 319h2l1 1h3v3.500h-6zM700 415h2l1 1h3v3h-6zM707.500 425h2l1 1h3v4h-6z" fill="#d8d8d8"/>
<text x="711" y="301.500" style="font-size:5px">グループ 1</text>
<text x="711" y="312" style="font-size:5px">グループ 2</text>
<text x="711" y="322.500" style="font-size:5px">くずは</text>
<text x="715.500" y="336.500" style="font-size:5px">レイヤー 40</text>
<text x="715.500" y="353.500" style="font-size:5px">長方形 1</text>
<text x="715.500" y="370.500" style="font-size:5px">レイヤー 41</text>
<text x="715.500" y="387.500" style="font-size:5px">レイヤー 42</text>
<text x="715.500" y="404.500" style="font-size:5px;fill:#c8c8c8">レイヤー 39</text>
<text x="711" y="418.500" style="font-size:5px">かなえ</text>
<text x="718" y="429.500" style="font-size:5px">メガネ</text>
<rect x="702" y="328" width="10" height="13" fill="url(#chk)"/>
<rect x="702" y="345" width="10" height="13" fill="url(#chk)"/>
<rect x="702" y="362" width="10" height="13" fill="url(#chk)"/>
<rect x="702" y="379" width="10" height="13" fill="url(#chk)"/>
<rect x="702" y="396" width="10" height="13" fill="url(#chk)"/>
<rect x="701" y="395" width="12" height="15" fill="none" stroke="#ddd" stroke-width=".7" stroke-dasharray="3 6"/>
<rect x="702" y="434" width="10" height="5" fill="url(#chk)"/>
<rect x="681" y="437" width="119" height="11" fill="#484848"/>
<rect x="681" y="437" width="119" height=".5" fill="#3a3a3a"/>
<g style="fill:none;stroke:#cfcfcf;stroke-width:.8">
<path d="M716 442.500h3M720 442.500h3" stroke-opacity=".5"/>
<rect x="740" y="440" width="5" height="5" fill="#cfcfcf"/><path d="M751 445a2.500 2.500 0 1 1 3-3"/><path d="M763 440h1.500l1 1h2.500v3.500h-5z" fill="#cfcfcf"/><path d="M774 440h4v4.500h-4zM776 442h3.500v3.500"/><path d="M784 441h5M785 441v4.500h3v-4.500"/>
</g>
<text x="727.500" y="445.500" style="font-size:6px;font-style:italic;fill:#cfcfcf">fx</text>
</svg>
</body></html>
